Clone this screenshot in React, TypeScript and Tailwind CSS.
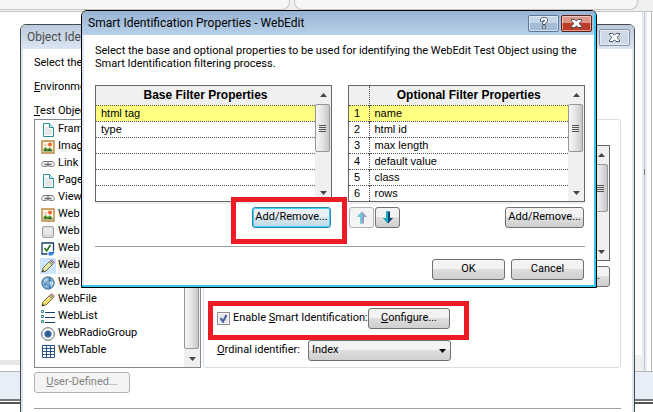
import type { ReactNode } from 'react';

type IconName = 'page' | 'image' | 'link' | 'button' | 'check' | 'pencil' | 'globe' | 'list' | 'radio' | 'table';

interface TestClass {
  name: string;
  icon: IconName;
  selected?: boolean;
}

const TEST_CLASSES: TestClass[] = [
  { name: 'Frame', icon: 'page' },
  { name: 'Image', icon: 'image' },
  { name: 'Link', icon: 'link' },
  { name: 'Page', icon: 'page' },
  { name: 'View', icon: 'link' },
  { name: 'Web', icon: 'image' },
  { name: 'Web', icon: 'button' },
  { name: 'Web', icon: 'check' },
  { name: 'Web', icon: 'pencil', selected: true },
  { name: 'Web', icon: 'globe' },
  { name: 'WebFile', icon: 'pencil' },
  { name: 'WebList', icon: 'list' },
  { name: 'WebRadioGroup', icon: 'radio' },
  { name: 'WebTable', icon: 'table' },
];

const BASE_PROPS = ['html tag', 'type', '', '', '', ''];
const OPTIONAL_PROPS = ['name', 'html id', 'max length', 'default value', 'class', 'rows'];

function ClassIcon({ name, selected }: { name: IconName; selected?: boolean }) {
  return (
    <svg viewBox="0 0 14 14" className="h-[14px] w-[14px] shrink-0" aria-hidden="true">
      {name === 'page' && (
        <>
          <path d="M2.5.5h6l4 4v9h-10z" fill="#fff" stroke="#2b8f93" />
          <path d="M4 4h4v2h3v6H4z" fill="#e4e7e9" />
          <path d="M8.5.5v4h4" fill="#d4eff0" stroke="#2b8f93" />
        </>
      )}
      {name === 'image' && (
        <>
          <path d="M1 1h12v12H1z" fill="#fdf3e2" stroke="#b9863f" strokeWidth="1.4" />
          <circle cx="9" cy="4.5" r="1.9" fill="#f0642c" />
          <circle cx="4.5" cy="5" r="1" fill="#f3b37a" />
          <path d="M2.5 11.5V9l2-2 2.2 2L9 7.5l2.500 2.500v1.500z" fill="#4f8a2d" />
          <path d="M4 10.500h1M7.500 10.500h2" stroke="#1f4414" />
        </>
      )}
      {name === 'link' && (
        <>
          <path d="M6.500 9.500h-5l-1-1.500L2 4.500h4.500zM7.500 9.500h5l1-1.500L12 4.500H7.500z" fill="#f2f2f2" stroke="#8d8d8d" />
          <path d="M2 4.500h10" stroke="#777" />
          <path d="M3.500 7.500h7" stroke="#6c6c6c" strokeWidth="1.400" />
          <path d="M6.500 5.500h1v1h-1zM6.500 9h1v1h-1z" fill="#fff" />
        </>
      )}
      {name === 'button' && (
        <>
          <rect x="1.500" y="1.500" width="11" height="11" rx="1.500" fill="#dcdcdc" stroke="#a2a2a2" />
          <path d="M3 3h8v6H3z" fill="#eaeaea" />
        </>
      )}
      {name === 'check' && (
        <>
          <path d="M1 1h11.500v11H1z" fill="#fff" stroke="#1d4067" strokeWidth="1.300" />
          <path d="M3.500 6l2.200 2.800L9.500 3" fill="none" stroke="#2f7a2c" strokeWidth="1.800" />
          <path d="M6.500 9.500H14V14H6.500z" fill="#fff" />
          <path d="M8 10.500h5l-2 2.500H8z" fill="#4e9bf0" stroke="#1c6bd8" />
        </>
      )}
      {name === 'pencil' && (
        <>
          <path d="M1 13l1-4L9.500 1.500l3 3L5 12z" fill={selected ? '#d9e0a0' : '#f8dc62'} stroke="#6c6334" strokeWidth=".9" />
          <path d="M2.800 10L9 3.600" stroke="#fdf5c4" strokeWidth="1" />
          <path d="M9.500 1.500L11 .6l2.400 2.400-.9 1.500z" fill={selected ? '#b9a4c4' : '#ee969c'} stroke="#94707c" strokeWidth=".7" />
          <path d="M8.300 2.700l3 3" stroke="#6d8f8c" strokeWidth="1.200" />
          <path d="M1 13l.6-2.400 1.800 1.800z" fill="#333" />
        </>
      )}
      {name === 'globe' && (
        <>
          <circle cx="7" cy="7" r="6.200" fill="#4c86b8" stroke="#2b5c8a" strokeWidth=".8" />
          <path d="M3 3.500l3-2 1 2-1.500 2.500L3 6zM8.500 6l3-1.500 1 3-2 3.500-1.500-2zM4 9l2 .5.5 2.500-2-1z" fill="#a9d0e6" />
          <path d="M1 7h12M7 1v12M3.500 2.500q-2.500 4.500 0 9M10.500 2.500q2.500 4.500 0 9" stroke="#dcebf5" strokeWidth=".5" fill="none" />
        </>
      )}
      {name === 'list' && (
        <>
          <path d="M.5.5h2v2h-2zM.5 5.500h2v2h-2zM.5 10.500h2v2h-2z" fill="#fff" stroke="#2b8f83" />
          <path d="M4 2.500h10M4 7.500h10M4 12.500h10" stroke="#1d4067" />
        </>
      )}
      {name === 'radio' && (
        <>
          <circle cx="7" cy="7" r="6.300" fill="#fff" stroke="#51606e" />
          <circle cx="7" cy="7" r="3.500" fill="#2d5f96" stroke="#7fa1c3" strokeWidth=".8" />
        </>
      )}
      {name === 'table' && (
        <>
          <path d="M0 0h14v14H0z" fill="#f0f0f0" />
          <path d="M1.500 1.500h12v12h-12z" fill="#fff" stroke="#2c558c" />
          <path d="M5.500 1v13M9.500 1v13M1 4.500h13M1 7.500h13M1 10.500h13" stroke="#2c558c" />
        </>
      )}
    </svg>
  );
}

function ScrollArrow({ up }: { up?: boolean }) {
  return (
    <button type="button" aria-label={up ? 'Scroll up' : 'Scroll down'} className="flex h-[17px] w-full shrink-0 items-center justify-center">
      <svg viewBox="0 0 7 4" className="h-1 w-[7px]" aria-hidden="true">
        <path d={up ? 'M0 4L3.5 0 7 4z' : 'M0 0h7L3.5 4z'} fill="#444" />
      </svg>
    </button>
  );
}

function Scrollbar({ long }: { long?: boolean }) {
  return (
    <div className="flex w-4 shrink-0 flex-col bg-[#f0f0f0]">
      <ScrollArrow up />
      <div
        className={`flex w-[15px] flex-col items-center justify-center gap-px rounded-xs border border-[#979797] bg-linear-to-r from-[#f6f6f6] via-[#e4e4e6] to-[#c6c7ca] ${long ? 'flex-1' : 'mt-px h-12'}`}
      >
        <span className="h-px w-[7px] bg-[#555]" />
        <span className="h-px w-[7px] bg-[#555]" />
        <span className="h-px w-[7px] bg-[#555]" />
        <span className="h-px w-[7px] bg-[#555]" />
      </div>
      <div className={long ? 'h-px' : 'flex-1'} />
      <ScrollArrow />
    </div>
  );
}

interface PushButtonProps {
  children: ReactNode;
  className?: string;
  focused?: boolean;
  disabled?: boolean;
}

function PushButton({ children, className = 'justify-center', focused, disabled }: PushButtonProps) {
  let tone = 'border-[#707070] bg-linear-to-b from-[#f3f3f3] from-45% via-[#dedede] via-50% to-[#cfcfcf] text-black';
  if (focused) tone = 'border-[#2c86b0] bg-linear-to-b from-[#eaf1f5] from-45% via-[#d6e4ec] via-50% to-[#c4dae6] text-black ring-1 ring-[#3fd0fb] ring-inset';
  if (disabled) tone = 'border-[#adb2b5] bg-[#f4f4f4] text-[#838383]';
  return (
    <button
      type="button"
      disabled={disabled}
      className={`flex h-[21px] shrink-0 items-center rounded-[3px] border whitespace-nowrap ${tone} ${className}`}
    >
      {children}
    </button>
  );
}

function CaptionButton({ kind, tone }: { kind: 'help' | 'close'; tone: string }) {
  return (
    <button
      type="button"
      aria-label={kind === 'help' ? 'Help' : 'Close'}
      className={`flex h-[17px] w-[31px] items-center justify-center rounded-xs border ring-1 ring-white/50 ring-inset ${tone}`}
    >
      {kind === 'close' ? (
        <svg viewBox="0 0 13 11" className="h-[11px] w-[13px]" aria-hidden="true">
          <path
            d="M1.500 1.500h3.400l1.600 1.700 1.600-1.700h3.400v1.600L9 5.500l2.500 2.400v1.600H8.100L6.500 7.800 4.900 9.500H1.500V7.900L4 5.500 1.500 3.100z"
            fill="#fff"
            stroke="#4a5366"
          />
        </svg>
      ) : (
        <svg viewBox="0 0 10 12" className="h-3 w-[10px]" aria-hidden="true">
          <path
            d="M1.500 2L3 .6h4L8.500 2v2.600L6.500 6.300v1.200h-3V5.600l2-1.600V3.200h-1V4.400h-3zM3.500 8.800h3v2.500h-3z"
            fill="#fff"
            stroke="#4a5366"
            strokeWidth=".9"
          />
        </svg>
      )}
    </button>
  );
}

function MoveArrow({ down }: { down?: boolean }) {
  return (
    <svg viewBox="0 0 12 13" className={`h-[13px] w-3 ${down ? 'rotate-180' : 'opacity-60'}`} aria-hidden="true">
      <path d="M6 .5L11 6H8v6.500H4V6H1z" fill={down ? '#0a3f78' : '#5a63a8'} />
      <path d={down ? 'M7 1.500L11 6H8v6.500H6V2z' : 'M5 1.500L1 6h3v6.500h2V2z'} fill="#14b4c0" />
    </svg>
  );
}

interface FilterTableProps {
  title: string;
  rows: string[];
  numbered?: boolean;
}

function FilterTable({ title, rows, numbered }: FilterTableProps) {
  return (
    <div className="flex border border-[#666] bg-white font-['Liberation_Sans',Arial,sans-serif] shadow-[0_3px_0_-1px_#eee]">
      <table className="w-full flex-1 border-collapse text-[11px] leading-[15px]">
        <thead>
          <tr className="h-[19px] border-b border-dotted border-[#555] bg-[#f0f0f0]">
            {numbered && <th aria-label="Order" className="w-5 border-r border-dotted border-[#555] p-0" />}
            <th className="p-0 text-center text-[12px] font-bold">{title}</th>
          </tr>
        </thead>
        <tbody>
          {rows.map((row, i) => (
            <tr key={i} className={`h-4 border-dotted border-[#555] not-last:border-b ${i === 0 ? 'bg-[#ffff80]' : ''}`}>
              {numbered && <td className="border-r border-dotted border-[#555] p-0 pl-[5px]">{i + 1}</td>}
              <td className="p-0 pl-[5px]">{row}</td>
            </tr>
          ))}
        </tbody>
      </table>
      <Scrollbar />
    </div>
  );
}

function Backdrop() {
  return (
    <div className="flex h-full flex-col">
      <div className="h-3 overflow-hidden border-b border-[#c4c4c4] bg-[#efefef]">
        <div className="flex h-[10px] gap-1">
          <div className="w-[290px] rounded-br-lg border-r border-b border-[#c4c4c4] bg-[#f6f6f6]" />
          <div className="mr-[15px] flex-1 rounded-b-lg border-x border-b border-[#c4c4c4] bg-[#f6f6f6]" />
        </div>
      </div>
      <div className="flex flex-1">
        <div className="flex w-5 flex-col justify-end">
          <div className="mb-[6px] h-[5px] bg-[#e6e6e6]" />
        </div>
        <div className="flex flex-1 justify-end">
          <div className="h-4 w-[7px] self-end bg-[#f0f0f0]" />
        </div>
        <div className="flex w-[5px] justify-center bg-[#e6edf5]">
          <div className="flex w-px flex-col justify-center bg-[#c3c8d0]">
            <div className="mb-10 h-[6px] w-px bg-[#777]" />
          </div>
        </div>
        <div className="mr-px ml-1 w-px bg-[#bbb]" />
      </div>
      <div className="h-7 border-t border-[#b5b5b5] bg-[#e7eef7]" />
      <div className="h-[5px] border-y-2 border-t-[#777] border-b-[#555] bg-white" />
      <div className="h-2 bg-white" />
    </div>
  );
}

function ObjectIdentificationWindow() {
  return (
    <section className="absolute top-6 right-[18px] -bottom-2 left-5 overflow-hidden rounded-t-md border border-[#45484d] bg-white">
      <header className="flex h-6 items-center justify-between bg-linear-to-b from-[#bccbdc] to-[#d9e5f2] pr-1 pl-[6px]">
        <h1 className="text-[12px] text-[#4c4c4c]">Object Identification</h1>
        <CaptionButton kind="close" tone="border-[#8593a5] bg-[#cfdae6]" />
      </header>
      <div className="h-full border-x-2 border-[#dce6f2] pt-[6px] pr-[11px] pl-[11px]">
        <p className="h-4 leading-4">Select the</p>
        <p className="mt-2 h-4 leading-4"><u>E</u>nvironment</p>
        <p className="mt-2 h-4 leading-4"><u>T</u>est Object</p>
        <div className="flex gap-[2px]">
          <div className="flex w-[167px] shrink-0 border border-[#828790]">
            <ul className="flex-1 pt-px pl-[5px]">
              {TEST_CLASSES.map((item, i) => (
                <li key={i} className="flex h-[17px] items-center gap-[2px]">
                  <span className={item.selected ? 'bg-[#cce4ff] px-px py-px' : 'px-px'}>
                    <ClassIcon name={item.icon} selected={item.selected} />
                  </span>
                  <span className={item.selected ? 'bg-[#f0f0f0]' : ''}>{item.name}</span>
                </li>
              ))}
            </ul>
            <Scrollbar long />
          </div>
          <div className="flex-1 rounded-[3px] border border-[#d5dfe5] pt-[25px] pr-[10px] pb-[6px] pl-[13px]">
            <div className="flex h-[116px] justify-end border border-[#666]">
              <Scrollbar />
            </div>
            <div className="mt-[5px] flex justify-end">
              <PushButton className="w-[79px] justify-end pr-[9px]">...</PushButton>
            </div>
            <div className="mt-[21px] flex items-center">
              <label className="flex w-[151px] items-center gap-[3px] whitespace-nowrap">
                <span className="relative h-[13px] w-[13px]">
                  <input type="checkbox" defaultChecked className="peer block h-[13px] w-[13px] appearance-none border border-[#8e8f8f] bg-[#e2e5ea] ring-1 ring-[#f8f8f8] ring-inset" />
                  <svg viewBox="0 0 13 13" className="pointer-events-none absolute inset-0 hidden peer-checked:block" aria-hidden="true">
                    <path d="M3.500 6l2.500 3.500L9.500 3" fill="none" stroke="#4a5f97" strokeWidth="2" />
                  </svg>
                </span>
                <span>Enable <u>S</u>mart Identification:</span>
              </label>
              <PushButton className="w-[82px] justify-center"><span><u>C</u>onfigure...</span></PushButton>
            </div>
            <div className="mt-[11px] flex items-center">
              <label htmlFor="ordinal" className="w-[91px] whitespace-nowrap"><u>O</u>rdinal identifier:</label>
              <div className="relative">
                <select
                  id="ordinal"
                  className="block h-[21px] w-[143px] appearance-none rounded-[3px] border border-[#707070] bg-linear-to-b from-[#f3f3f3] from-45% via-[#dedede] via-50% to-[#cfcfcf] pl-[3px]"
                >
                  <option>Index</option>
                  <option>Location</option>
                </select>
                <svg viewBox="0 0 7 4" className="pointer-events-none absolute top-[9px] right-[5px] h-1 w-[7px]" aria-hidden="true">
                  <path d="M0 0h7L3.500 4z" fill="#000" />
                </svg>
              </div>
            </div>
          </div>
        </div>
        <PushButton disabled className="mt-1 w-24 justify-center"><span><u>U</u>ser-Defined...</span></PushButton>
        <hr className="mt-[15px] border-[#a0a0a0]" />
      </div>
    </section>
  );
}

function SmartIdentificationDialog() {
  return (
    <section
      role="dialog"
      aria-label="Smart Identification Properties"
      className="absolute top-[10px] right-14 left-[81px] overflow-hidden rounded-t-md border border-black bg-white"
    >
      <div className="border-r-2 border-b-2 border-[#35c5ee]">
        <header className="flex h-6 items-center justify-between bg-linear-to-b from-[#98b4d2] to-[#b8d0e9] pr-[2px] pl-[6px]">
          <h2 className="text-[12px]">Smart Identification Properties - WebEdit</h2>
          <div className="flex gap-[2px]">
            <CaptionButton kind="help" tone="border-[#5f7896] bg-linear-to-b from-[#c5d6e8] from-45% to-[#a3bdd8] to-50%" />
            <CaptionButton kind="close" tone="border-[#5c1e1b] bg-linear-to-b from-[#dd9587] from-45% to-[#bd3c26] to-50%" />
          </div>
        </header>
        <div className="border-l-2 border-[#dce8f5] pt-[9px] pr-[9px] pb-[5px] pl-[11px]">
          <p className="leading-[13px]">
            Select the base and optional properties to be used for identifying the WebEdit Test Object using the
            Smart Identification filtering process.
          </p>
          <div className="mt-[15px] grid grid-cols-2 gap-4">
            <FilterTable title="Base Filter Properties" rows={BASE_PROPS} />
            <FilterTable title="Optional Filter Properties" rows={OPTIONAL_PROPS} numbered />
          </div>
          <div className="mt-[5px] grid grid-cols-2 gap-4">
            <div className="flex justify-end pr-px">
              <PushButton focused className="w-[79px] justify-center">Add/Remove...</PushButton>
            </div>
            <div className="flex gap-px px-px">
              <PushButton disabled className="w-[25px] justify-center"><MoveArrow /></PushButton>
              <PushButton className="w-[25px] justify-center"><MoveArrow down /></PushButton>
              <PushButton className="ml-auto w-[79px] justify-center">Add/Remove...</PushButton>
            </div>
          </div>
          <hr className="mt-[18px] border-[#a0a0a0]" />
          <div className="mt-3 flex justify-end gap-[6px] pr-px">
            <PushButton className="w-[73px] justify-center">OK</PushButton>
            <PushButton className="w-[73px] justify-center">Cancel</PushButton>
          </div>
        </div>
      </div>
    </section>
  );
}

export default function App() {
  return (
    <main className="relative h-screen overflow-hidden bg-white font-[Roboto,sans-serif] text-[11px] text-black">
      <Backdrop />
      <ObjectIdentificationWindow />
      <SmartIdentificationDialog />
      {/* callouts around the two buttons of interest */}
      <div className="pointer-events-none absolute top-[197px] left-[231px] h-[47px] w-[116px] border-5 border-[#ed1c24]" />
      <div className="pointer-events-none absolute top-[301px] left-[208px] h-[39px] w-[261px] border-5 border-[#ed1c24]" />
    </main>
  );
}
